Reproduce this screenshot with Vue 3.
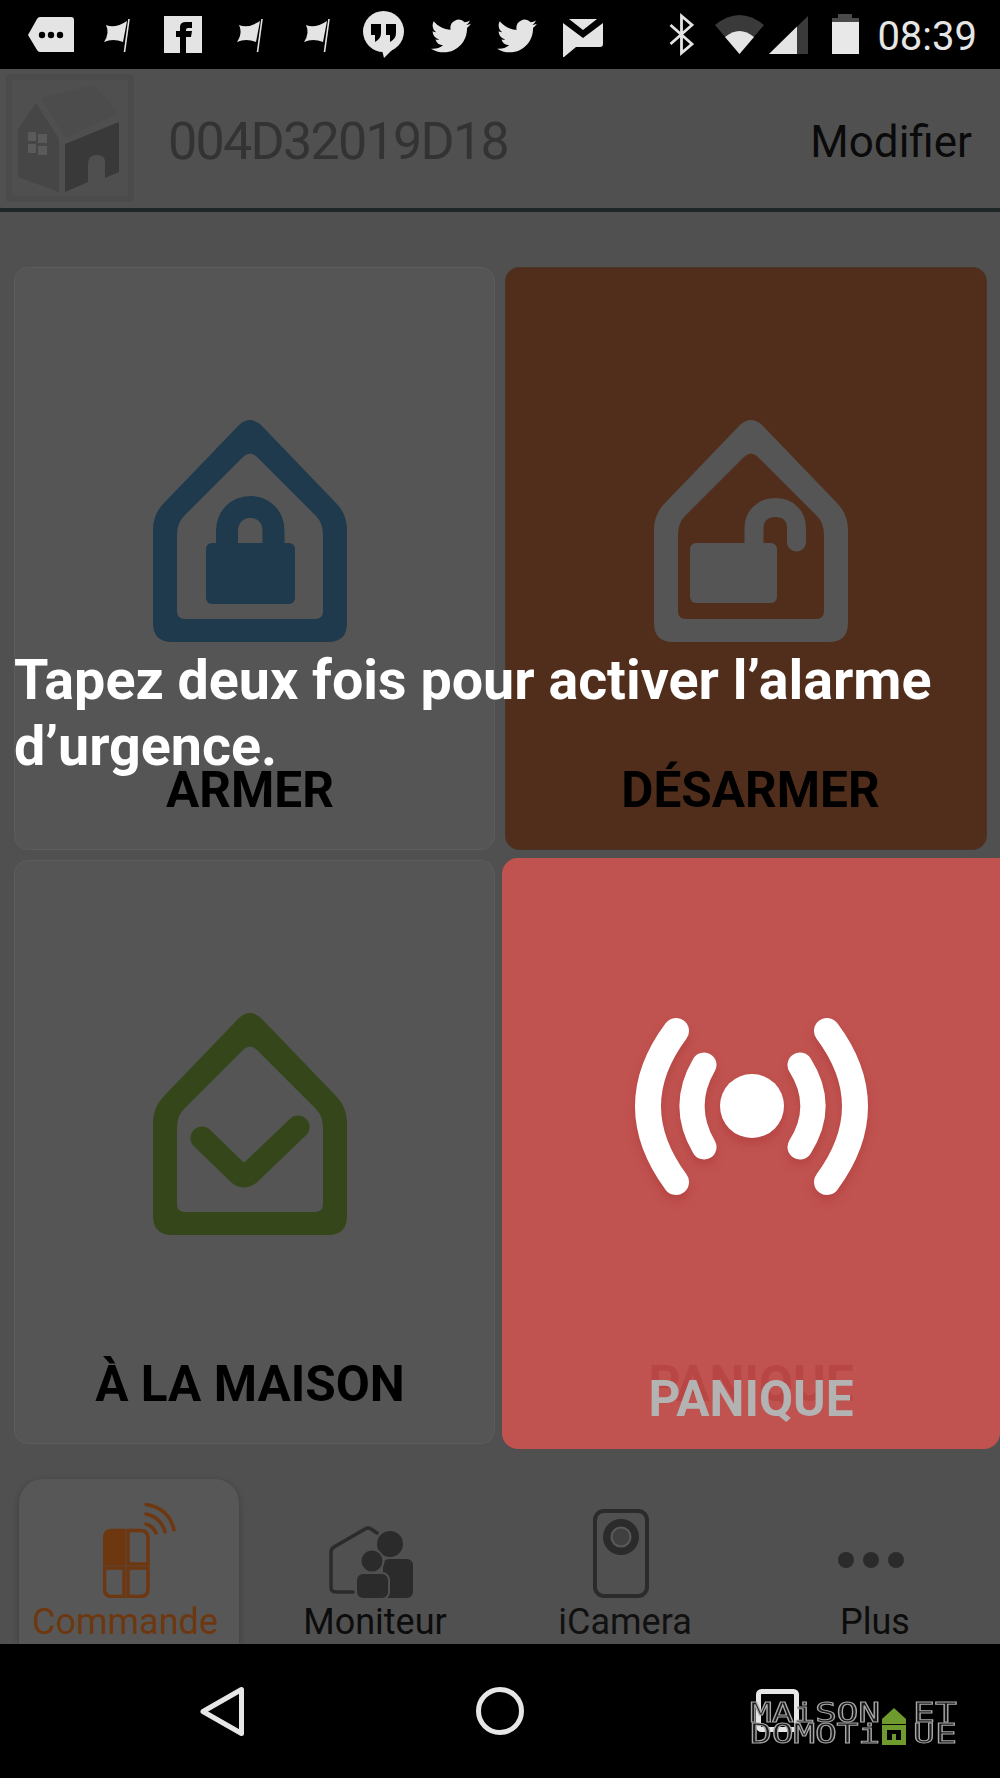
<template>
  <div class="screen">
    <!-- Status bar -->
    <header class="status">
      <svg class="ic" width="47" height="69" viewBox="0 0 47 69">
        <path d="M1 35 L10 19 Q11 17 13 17 H44 Q47 17 47 20 V52 H13 Q11 52 10 50 Z" fill="#e4e4e4" />
        <circle cx="15" cy="35" r="3.2" /><circle cx="24" cy="35" r="3.2" /><circle cx="33" cy="35" r="3.2" />
      </svg>
      <svg class="ic ic-flag1" width="26" height="69" viewBox="0 0 26 69"><use href="#flag" /></svg>
      <svg class="ic ic-f" width="38" height="69" viewBox="0 0 38 69">
        <rect y="16" width="38" height="37" fill="#e4e4e4" />
        <path d="M16 53 V37 H12 V31 H16 V27 Q16 22 22 22 H28 V28 H24 Q22 28 22 30 V31 H28 L27 37 H22 V53 Z" />
      </svg>
      <svg class="ic ic-flag2" width="26" height="69" viewBox="0 0 26 69"><use href="#flag" /></svg>
      <svg class="ic ic-flag3" width="26" height="69" viewBox="0 0 26 69"><use href="#flag" /></svg>
      <svg class="ic ic-hang" width="41" height="69" viewBox="0 0 41 69">
        <circle cx="20.5" cy="31.5" r="20.5" fill="#e4e4e4" />
        <path d="M19 50 L21 58 L32 47 Z" fill="#e4e4e4" />
        <path d="M8 24 H18 V33 Q18 39 12 42 V35 H8 Z M23 24 H33 V33 Q33 39 27 42 V35 H23 Z" />
      </svg>
      <svg class="ic ic-tw" width="40" height="69" viewBox="0 0 40 69"><use href="#bird" /></svg>
      <svg class="ic ic-tw2" width="40" height="69" viewBox="0 0 40 69"><use href="#bird" /></svg>
      <svg class="ic ic-mail" width="40" height="69" viewBox="0 0 40 69">
        <path d="M0 23 L20 38 L40 23 V44 Q40 47 37 47 H13 L1 57 L0 57 Z M6 19 H34 L20 30 Z" fill="#e4e4e4" />
      </svg>

      <svg class="ic ic-bt" width="25" height="69" viewBox="0 0 25 69">
        <path d="M1.5 25 L23 44 L12.5 53 V16 L23 25 L1.5 44" fill="none" stroke="#e4e4e4" stroke-width="2.8" />
      </svg>
      <svg class="ic ic-wifi" width="49" height="69" viewBox="0 0 49 69">
        <path d="M0 25 Q24.5 5 49 25 L24.5 54 Z" fill="#3a3a3a" />
        <path d="M10 37 Q24.5 25 39 37 L24.5 54 Z" fill="#e4e4e4" />
      </svg>
      <svg class="ic ic-signal" width="39" height="69" viewBox="0 0 39 69">
        <path d="M0 54 L39 16 V54 Z" fill="#3a3a3a" />
        <path d="M0 54 L28 26.5 V54 Z" fill="#e4e4e4" />
      </svg>
      <svg class="ic ic-batt" width="27" height="69" viewBox="0 0 27 69">
        <path d="M6 18 V14 H20 V18 H27 V22 H0 V18 Z" fill="#4a4a4a" />
        <rect y="22" width="27" height="32" fill="#e8e8e8" />
      </svg>
      <span class="time">08:39</span>
    </header>

    <!-- App header -->
    <div class="topbar">
      <div class="thumb">
        <svg width="128" height="128" viewBox="0 0 128 128">
          <rect x="6" y="6" width="116" height="116" rx="3" fill="#4f4f4f" />
          <path d="M12 103 V55 L30 29 L53 65 V118 Z" fill="#464646" />
          <path d="M35 24 L88 11 L113 39 L59 64 Z" fill="#4c4c4c" />
          <path d="M59 70 L113 48 V98 L99 104 V88 Q99 81 91 81 Q82 81 82 90 V108 L59 118 Z" fill="#393939" />
          <path d="M22 58 h8 v9 h-8 Z M32 60 h9 v9 h-9 Z M22 70 h8 v9 h-8 Z M32 72 h9 v9 h-9 Z" fill="#5a5a5a" />
        </svg>
      </div>
      <span class="device">004D32019D18</span>
      <span class="edit">Modifier</span>
    </div>

    <!-- Command grid -->
    <main class="main">
      <div class="grid">
        <div class="card card-l">
          <svg width="194" height="223" viewBox="0 0 194 223">
            <path :d="housePath" fill="#1f394d" fill-rule="evenodd" />
            <path d="M74 128 V111 C74 97 84 87 97.5 87 C111 87 120.5 97 120.5 111 V128" fill="none" stroke="#1f394d" stroke-width="22" />
            <rect x="53" y="123" width="89" height="61" rx="6" fill="#1f394d" />
          </svg>
          <span class="label">ARMER</span>
        </div>
        <div class="card card-r card-active">
          <svg width="194" height="223" viewBox="0 0 194 223">
            <path :d="housePath" fill="#555" fill-rule="evenodd" />
            <path d="M100 128 V108 C100 96 109 87.5 121 87.5 C134 87.5 142.5 96 142.5 108 V122" fill="none" stroke="#555" stroke-width="19" stroke-linecap="round" />
            <rect x="36" y="123" width="87" height="60" rx="6" fill="#555" />
          </svg>
          <span class="label">DÉSARMER</span>
        </div>
        <div class="card card-l">
          <svg width="194" height="223" viewBox="0 0 194 223">
            <path :d="housePath" fill="#35461a" fill-rule="evenodd" />
            <path d="M49 125 L85 160 Q91 166 97 160 L145 114" fill="none" stroke="#35461a" stroke-width="23" stroke-linecap="round" stroke-linejoin="round" />
          </svg>
          <span class="label">À LA MAISON</span>
        </div>
        <div class="card panic">
          <svg class="waves" width="240" height="190" viewBox="0 0 240 190">
            <g fill="none" stroke="#fff" stroke-linecap="round">
              <path d="M45 13 Q-11 88 45 164 M196 13 Q252 88 196 164" stroke-width="26" />
              <path d="M73 47 Q49 88 73 129 M169 47 Q195 88 169 129" stroke-width="25" />
            </g>
            <circle cx="121" cy="88" r="32" fill="#fff" />
          </svg>
          <span class="label label-ghost">PANIQUE</span>
          <span class="label label-top">PANIQUE</span>
        </div>
      </div>

      <nav class="tabs">
        <div class="tab tab-on">
          <svg width="75" height="96" viewBox="0 0 75 96">
            <g fill="none" stroke="#6d3710" stroke-width="3.5">
              <path d="M21 28.5 H9 Q1.5 28.5 1.5 36 V62 H21 Z" fill="#6d3710" />
              <path d="M25 28.5 H37 Q45 28.5 45 36 V62 H25 Z" />
              <path d="M1.5 66 V87 Q1.5 94.5 9 94.5 H21 V66 Z" />
              <path d="M25 66 H45 V87 Q45 94.5 37 94.5 H25 Z" />
              <path d="M43 22 Q50 24 53 31 M43 12 Q58 15 62 30 M43 2.5 Q66 6 71 28" stroke-linecap="round" />
            </g>
          </svg>
          <span>Commande</span>
        </div>
        <div class="tab tab-mon">
          <svg width="84" height="72" viewBox="0 0 84 72">
            <path d="M24 66 H7 Q2 66 2 61 V26 Q2 23 5 21 L36 3 Q39 1 42 3 L48 7" fill="none" stroke="#2b2b2b" stroke-width="3.5" stroke-linecap="round" />
            <circle cx="61" cy="18" r="13" fill="#2b2b2b" />
            <rect x="54" y="33" width="30" height="39" rx="6" fill="#2b2b2b" />
            <circle cx="43" cy="35" r="11.5" fill="#2b2b2b" stroke="#505050" stroke-width="2" />
            <rect x="27" y="47" width="33" height="26" rx="7" fill="#2b2b2b" stroke="#505050" stroke-width="2" />
          </svg>
          <span>Moniteur</span>
        </div>
        <div class="tab tab-cam">
          <svg width="56" height="89" viewBox="0 0 56 89">
            <rect x="2" y="2" width="52" height="85" rx="9" fill="none" stroke="#2b2b2b" stroke-width="4" />
            <circle cx="28" cy="28" r="18" fill="#2b2b2b" />
            <circle cx="28" cy="28" r="9.5" fill="#404040" stroke="#5a5a5a" stroke-width="2" />
          </svg>
          <span>iCamera</span>
        </div>
        <div class="tab">
          <svg class="dots" width="66" height="16" viewBox="0 0 66 16">
            <circle cx="8" cy="8" r="8" fill="#2b2b2b" />
            <circle cx="33" cy="8" r="8" fill="#2b2b2b" />
            <circle cx="58" cy="8" r="8" fill="#2b2b2b" />
          </svg>
          <span>Plus</span>
        </div>
      </nav>
    </main>

    <!-- Android navigation -->
    <footer class="sysnav">
      <svg width="50" height="134" viewBox="0 0 50 134"><path d="M43.5 45.5 V89.5 L5 67.5 Z" fill="none" stroke="#e6e6e6" stroke-width="5" stroke-linejoin="round" /></svg>
      <svg width="50" height="134" viewBox="0 0 50 134"><circle cx="25" cy="67" r="21.5" fill="none" stroke="#e6e6e6" stroke-width="5" /></svg>
      <svg width="50" height="134" viewBox="0 0 50 134"><rect x="6.5" y="47.5" width="38" height="38" rx="3" fill="none" stroke="#e6e6e6" stroke-width="5" /></svg>
    </footer>

    <!-- Hint over the dimmed page -->
    <p class="hint">Tapez deux fois pour activer l’alarme d’urgence.</p>

    <!-- Watermark -->
    <div class="mark">
      <div class="mark-line"><span class="mark-a">MAiSON</span><svg class="mark-roof" width="24" height="16" viewBox="0 0 24 16"><path d="M12 0 L24 11 V16 H0 V11 Z" fill="#6f9a2d" /></svg><span class="mark-b">ET</span></div>
      <div class="mark-line"><span class="mark-a">DOMOTi</span><svg class="mark-roof" width="24" height="20" viewBox="0 0 24 20"><path d="M0 0 H24 V20 H0 Z M5 5 V15 H10 V9 H14 V15 H19 V5 Z" fill="#6f9a2d" fill-rule="evenodd" /></svg><span class="mark-b">UE</span></div>
    </div>

    <!-- Shared glyphs -->
    <svg width="0" height="0" class="defs">
      <defs>
        <g id="flag">
          <path d="M2 25 Q11 29 23 21 L19 42 Q9 38 0 42 Q6 33 2 25 Z" fill="#e4e4e4" />
          <path d="M25 19 L20.5 52" stroke="#e4e4e4" stroke-width="1.6" />
        </g>
        <path id="bird" transform="translate(0 16) scale(1.67)" fill="#e4e4e4" d="M23.953 4.57a10 10 0 01-2.825.775 4.958 4.958 0 002.163-2.723c-.951.555-2.005.959-3.127 1.184a4.92 4.92 0 00-8.384 4.482C7.69 8.095 4.067 6.13 1.64 3.162a4.822 4.822 0 00-.666 2.475c0 1.71.87 3.213 2.188 4.096a4.904 4.904 0 01-2.228-.616v.06a4.923 4.923 0 003.946 4.827 4.996 4.996 0 01-2.212.085 4.936 4.936 0 004.604 3.417 9.867 9.867 0 01-6.102 2.105c-.39 0-.779-.023-1.17-.067a13.995 13.995 0 007.557 2.209c9.053 0 13.998-7.496 13.998-13.985 0-.21 0-.42-.015-.63A9.935 9.935 0 0024 4.59z" />
      </defs>
    </svg>
  </div>
</template>

<script setup>
// outer outline + inner cut of the little house used on three cards
const housePath =
  'M86 5 Q97 -5 108 5 L183 83 Q194 94 194 110 V203 Q194 222 175 222 H19 Q0 222 0 203 V110 Q0 94 11 83 Z ' +
  'M90 37 Q97 30 104 37 L163 96 Q170 103 170 115 V191 Q170 199 162 199 H32 Q24 199 24 191 V115 Q24 103 31 96 Z'
</script>

<style>
html, body { margin: 0; background: #000; }
</style>

<style scoped>
.screen {
  position: relative;
  width: 1000px;
  height: 1778px;
  display: flex;
  flex-direction: column;
  overflow: hidden;
  background: #505050;
  font-family: Roboto, "Liberation Sans", sans-serif;
}

/* ─── Status bar ─── */
.status {
  height: 69px;
  flex: none;
  display: flex;
  padding: 0 23px 0 27px;
  background: #000;
}
.ic { display: block; flex: none; }
.ic-flag1 { margin-left: 30px; }
.ic-f { margin-left: 34px; }
.ic-flag2 { margin-left: 35px; }
.ic-flag3 { margin-left: 41px; }
.ic-hang { margin-left: 33px; }
.ic-tw { margin-left: 27px; }
.ic-tw2 { margin-left: 26px; }
.ic-mail { margin-left: 26px; }
.ic-bt { margin-left: auto; }
.ic-wifi { margin-left: 21px; }
.ic-signal { margin-left: 5px; }
.ic-batt { margin-left: 24px; }
.time {
  margin-left: 18px;
  font-size: 40px;
  line-height: 73px;
  color: #e6e6e6;
}
.defs { position: absolute; }

/* ─── Top bar ─── */
.topbar {
  height: 143px;
  flex: none;
  display: flex;
  align-items: center;
  box-sizing: border-box;
  padding: 0 28px 1px 6px;
  border-bottom: 4px solid #1f2628;
}
.thumb { width: 128px; height: 128px; background: #4b4b4b; border-radius: 3px; flex: none; }
.thumb svg { display: block; }
.device { margin: 6px 0 0 34px; font-size: 52px; color: #333; letter-spacing: -1.7px; }
.edit { margin: 7px 0 0 auto; font-size: 44px; color: #0a0a0a; }

/* ─── Cards ─── */
.main { flex: 1; display: flex; flex-direction: column; justify-content: space-between; }
.grid {
  display: grid;
  grid-template-columns: 481px 482px;
  grid-template-rows: 583px 584px;
  gap: 10px;
  padding: 55px 13px 0 14px;
}
.card {
  position: relative;
  display: flex;
  flex-direction: column;
  align-items: center;
  box-sizing: border-box;
  padding-top: 152px;
  background: #555;
  border: 1px solid #5c5c5c;
  border-radius: 14px;
}
.card svg { display: block; flex: none; }
.card-l { padding-right: 9px; }
.card-r { padding-left: 9px; }
.card-active { background: #512e1b; border-color: #4a3426; }
.label {
  margin-top: auto;
  padding-bottom: 31px;
  font-size: 49.5px;
  line-height: 56px;
  font-weight: 700;
  color: #000;
}

/* highlighted cell sticks out of its grid slot */
.panic {
  margin: -2px -13px -5px -3px;
  padding-top: 160px;
  background: #c0524f;
  border: none;
  border-radius: 16px 0 16px 16px;
}
.waves { filter: drop-shadow(0 6px 5px rgba(150, 30, 30, 0.25)); }
.label-ghost { padding-bottom: 37px; color: #b84644; }
.label-top {
  position: absolute;
  left: 0;
  right: 0;
  bottom: 22px;
  margin: 0;
  padding: 0;
  text-align: center;
  color: #b3b3b3;
}

/* ─── Bottom tabs ─── */
.tabs {
  height: 165px;
  flex: none;
  display: grid;
  grid-template-columns: repeat(4, 250px);
}
.tab {
  position: relative;
  display: flex;
  flex-direction: column;
  align-items: center;
  justify-content: flex-end;
  padding-bottom: 2px;
  font-size: 36px;
  line-height: 40px;
  color: #0c0c0c;
}
.tab svg { position: relative; display: block; margin-bottom: 4px; }
.tab span { position: relative; }
.tab-mon svg { margin-right: 9px; }
.tab-cam { color: #111; }
.tab-cam svg { margin-right: 8px; }
.tab .dots { margin-bottom: 34px; margin-left: -8px; }
.tab-on { color: #6d3710; }
.tab-on svg { margin-left: 30px; }
.tab-on::before {
  content: '';
  position: absolute;
  left: 19px;
  width: 220px;
  top: 0;
  bottom: 0;
  background: #575757;
  border-radius: 24px 24px 0 0;
  box-shadow: 0 2px 6px rgba(0, 0, 0, 0.25);
}

/* ─── System nav ─── */
.sysnav {
  height: 134px;
  flex: none;
  display: flex;
  justify-content: space-between;
  padding: 0 198px;
  background: #000;
  position: relative;
}
.sysnav svg { display: block; }

/* ─── Overlay ─── */
.hint {
  position: absolute;
  left: 14px;
  top: 647px;
  width: 960px;
  margin: 0;
  font-size: 55.6px;
  line-height: 66px;
  font-weight: 700;
  color: #fff;
}
.mark {
  position: absolute;
  left: 750px;
  top: 1703px;
  width: 207px;
  font-family: "DejaVu Sans Mono", monospace;
  font-size: 26px;
  line-height: 21px;
  color: #1a1a1a;
  -webkit-text-stroke: 1px #a8a8a8;
}
.mark-line { position: relative; height: 21px; display: flex; align-items: flex-end; }
.mark-a { display: inline-block; width: 132px; transform: scaleX(1.4); transform-origin: 0 50%; white-space: nowrap; letter-spacing: -0.2px; }
.mark-roof { display: block; flex: none; margin-right: 7px; }
.mark-b { display: inline-block; transform: scaleX(1.4); transform-origin: 0 50%; }
</style>
